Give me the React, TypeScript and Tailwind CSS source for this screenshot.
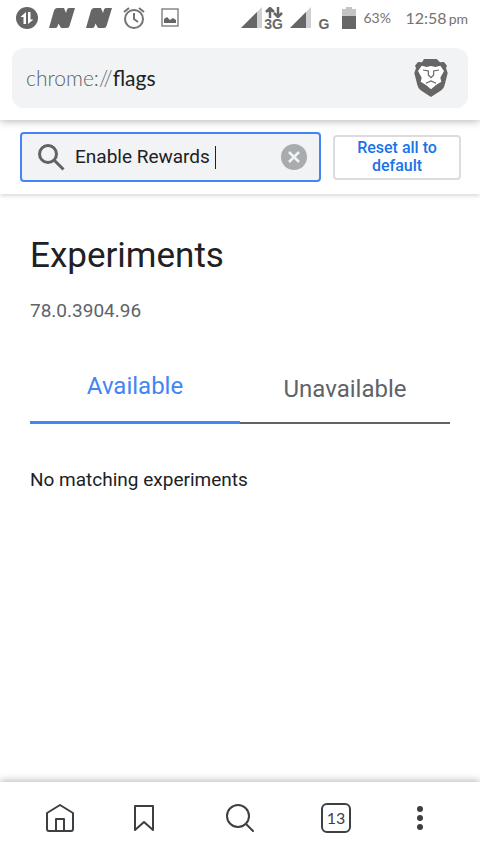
import { useState } from 'react';

type Tab = 'available' | 'unavailable';

function NIcon() {
  return (
    <svg width="26" height="20" viewBox="0 0 26 20" fill="#666">
      <path d="M8 0H15L17 5L18 1.5Q18.5 0 20 0H26L20.5 18Q20 20 18 20H12L9.5 15.500L8.5 18.500Q8 20 6 20H0L5 2.5Q5.800 0 8 0Z" />
    </svg>
  );
}

function SignalIcon() {
  return (
    <svg width="22" height="22" viewBox="0 0 22 22">
      <path d="M0 21L21 0V21Z" fill="#d0d0d0" />
      <path d="M0 21L16 5V21Z" fill="#666" />
    </svg>
  );
}

function StatusBar() {
  return (
    <div className="flex h-9 items-center justify-between pr-3 pl-4 text-[#737373]">
      <div className="flex items-center gap-[11px]">
        <svg width="22" height="22" viewBox="0 0 22 22">
          <circle cx="11" cy="11" r="11" fill="#666" />
          <path d="M10 5V17H7.500V10H4.500Z M12 17V5H14.500V12.500H17.500Z" fill="#fff" />
        </svg>
        <NIcon />
        <NIcon />
        <svg width="22" height="22" viewBox="0 0 22 22" fill="none" stroke="#737373" strokeWidth="2">
          <circle cx="11" cy="12" r="9" />
          <path d="M11 6V12L15 15M1 5L6 1M21 5L16 1" />
        </svg>
        <svg width="20" height="20" viewBox="0 0 20 20" className="ml-1">
          <rect x="2" y="1" width="16" height="17" fill="none" stroke="#888" strokeWidth="1.5" />
          <path d="M4 15V11L7 9L10 12L13 10L16 12V15Z" fill="#666" />
        </svg>
      </div>
      <div className="flex items-center">
        <SignalIcon />
        <div className="ml-px flex w-5 flex-col items-center">
          <svg width="18" height="11" viewBox="0 0 18 11" fill="none" stroke="#666" strokeWidth="2.5">
            <path d="M5 11V2M1 5L5 1L9 5M13 0V9M9 6L13 10L17 6" />
          </svg>
          <span className="font-['Liberation_Sans'] text-sm leading-3 font-bold text-[#666]">3G</span>
        </div>
        <div className="ml-[6px]">
          <SignalIcon />
        </div>
        <span className="mt-3 ml-[7px] w-4 font-['Liberation_Sans'] text-sm leading-3 font-bold text-[#666]">G</span>
        <svg width="14" height="22" viewBox="0 0 14 22" className="ml-[7px]">
          <path d="M0 2H4V0H10V2H14V22H0Z" fill="#c4c4c4" />
          <path d="M0 9H14V22H0Z" fill="#666" />
        </svg>
        <span className="ml-2 w-8 text-sm">63%</span>
        <span className="ml-[10px] flex items-baseline gap-[2px] text-base">
          12:58 <span className="text-sm">pm</span>
        </span>
      </div>
    </div>
  );
}

function LionIcon() {
  return (
    <svg width="34" height="38" viewBox="0 0 102 114">
      <path
        d="M30 0H68L78 10L90 9L99 20L96 27L101 42L92 78Q90 88 82 94L51 114L20 94Q12 88 10 78L1 42L6 27L3 20L12 9L24 10Z"
        fill="#666"
      />
      <path
        d="M23 20L38 24L51 21L64 24L79 20L90 36L79 56L82 68L66 78L51 91L36 78L20 68L23 56L12 36Z"
        fill="#fff"
      />
      <path
        d="M27 33L43 36V48L51 56L59 48V36L75 33M36 73L51 66L66 73"
        fill="none"
        stroke="#666"
        strokeWidth="3.5"
      />
    </svg>
  );
}

function BottomBar() {
  return (
    <nav className="flex h-[72px] items-center justify-between bg-white px-10 text-[#3c4043] shadow-[0_-1px_8px_rgba(0,0,0,0.3)]">
      <button aria-label="Home" className="flex w-10 justify-center">
        <svg width="28" height="28" viewBox="0 0 28 28" fill="none" stroke="currentColor" strokeWidth="2" strokeLinejoin="round">
          <path d="M14 1L27 9V25Q27 27 25 27H3Q1 27 1 25V9ZM10 27V15H18V27" />
        </svg>
      </button>
      <button aria-label="Bookmarks" className="flex w-10 justify-center">
        <svg width="20" height="28" viewBox="0 0 20 28" fill="none" stroke="currentColor" strokeWidth="2" strokeLinejoin="round">
          <path d="M1 2H19V26L10 18L1 26Z" />
        </svg>
      </button>
      <button aria-label="Search" className="flex w-16 justify-center">
        <svg width="28" height="28" viewBox="0 0 28 28" fill="none" stroke="currentColor" strokeWidth="2" strokeLinecap="round">
          <circle cx="12" cy="12" r="11" />
          <path d="M20 20L27 27" />
        </svg>
      </button>
      <button aria-label="Tabs" className="flex w-10 justify-center">
        <span className="flex h-[30px] w-[30px] items-center justify-center rounded-md border-2 border-[#3c4043] text-base">
          13
        </span>
      </button>
      <button aria-label="Menu" className="flex w-10 justify-center">
        <svg width="6" height="24" viewBox="0 0 6 24" fill="currentColor">
          <circle cx="3" cy="3" r="3" />
          <circle cx="3" cy="12" r="3" />
          <circle cx="3" cy="21" r="3" />
        </svg>
      </button>
    </nav>
  );
}

export default function App() {
  const [query, setQuery] = useState('Enable Rewards ');
  const [tab, setTab] = useState<Tab>('available');

  const activeTab = 'border-b-3 border-[#4285f4] pt-1 text-[#4285f4]';
  const inactiveTab = 'border-b-2 border-[#5f6368] pt-2 text-[#5f6368]';

  return (
    <div className="flex min-h-screen flex-col bg-white font-['Lato',sans-serif]">
      <header className="relative z-10 bg-white shadow-[0_1px_8px_rgba(0,0,0,0.3)]">
        <StatusBar />
        <div className="px-3 pt-3 pb-3">
          <div className="flex h-[60px] items-center justify-between rounded-xl bg-[#f1f3f4] pr-5 pl-[14px]">
            <span className="text-[21px] font-light text-[#5f6368]">
              chrome://<span className="font-normal text-[#202124]">flags</span>
            </span>
            <button aria-label="Brave Shields">
              <LionIcon />
            </button>
          </div>
        </div>
      </header>

      <main className="flex-1 font-['Roboto',sans-serif] text-[#202124]">
        <div className="flex items-center gap-3 py-3 pr-[19px] pl-5 shadow-[0_1px_5px_rgba(0,0,0,0.2)]">
          <div className="flex h-[50px] flex-1 items-center rounded-sm border-2 border-[#4285f4] bg-[#f1f3f4] pr-3 pl-4">
            <svg width="27" height="27" viewBox="0 0 27 27" fill="none" stroke="#5f6368" strokeWidth="3">
              <circle cx="10" cy="10" r="8.5" />
              <path d="M16 16L25.5 25.5" />
            </svg>
            <input
              aria-label="Search flags"
              value={query}
              onChange={(e) => setQuery(e.target.value)}
              className="ml-[10px] field-sizing-content text-[19px] outline-none"
            />
            <span className="h-[23px] w-px bg-[#202124]" />
            <button aria-label="Clear search" onClick={() => setQuery('')} className="ml-auto">
              <svg width="26" height="26" viewBox="0 0 26 26">
                <circle cx="13" cy="13" r="13" fill="#a9acae" />
                <path d="M8 8L18 18M18 8L8 18" stroke="#f1f3f4" strokeWidth="2.5" />
              </svg>
            </button>
          </div>
          <button className="h-[45px] w-32 rounded-sm border-2 border-[#dadce0] px-4 text-base leading-[18px] font-medium text-[#1a73e8]">
            Reset all to default
          </button>
        </div>

        <div className="px-[30px] pt-10">
          <h1 className="text-[35px] leading-11">Experiments</h1>
          <p className="mt-[21px] text-[19px] leading-6 text-[#5f6368]">78.0.3904.96</p>

          <div className="mt-6 grid h-[77px] grid-cols-2" role="tablist">
            <button
              role="tab"
              aria-selected={tab === 'available'}
              onClick={() => setTab('available')}
              className={`text-2xl ${tab === 'available' ? activeTab : inactiveTab}`}
            >
              Available
            </button>
            <button
              role="tab"
              aria-selected={tab === 'unavailable'}
              onClick={() => setTab('unavailable')}
              className={`text-2xl ${tab === 'unavailable' ? activeTab : inactiveTab}`}
            >
              Unavailable
            </button>
          </div>

          <p className="mt-11 text-[19px] leading-6">No matching experiments</p>
        </div>
      </main>

      <BottomBar />
    </div>
  );
}
